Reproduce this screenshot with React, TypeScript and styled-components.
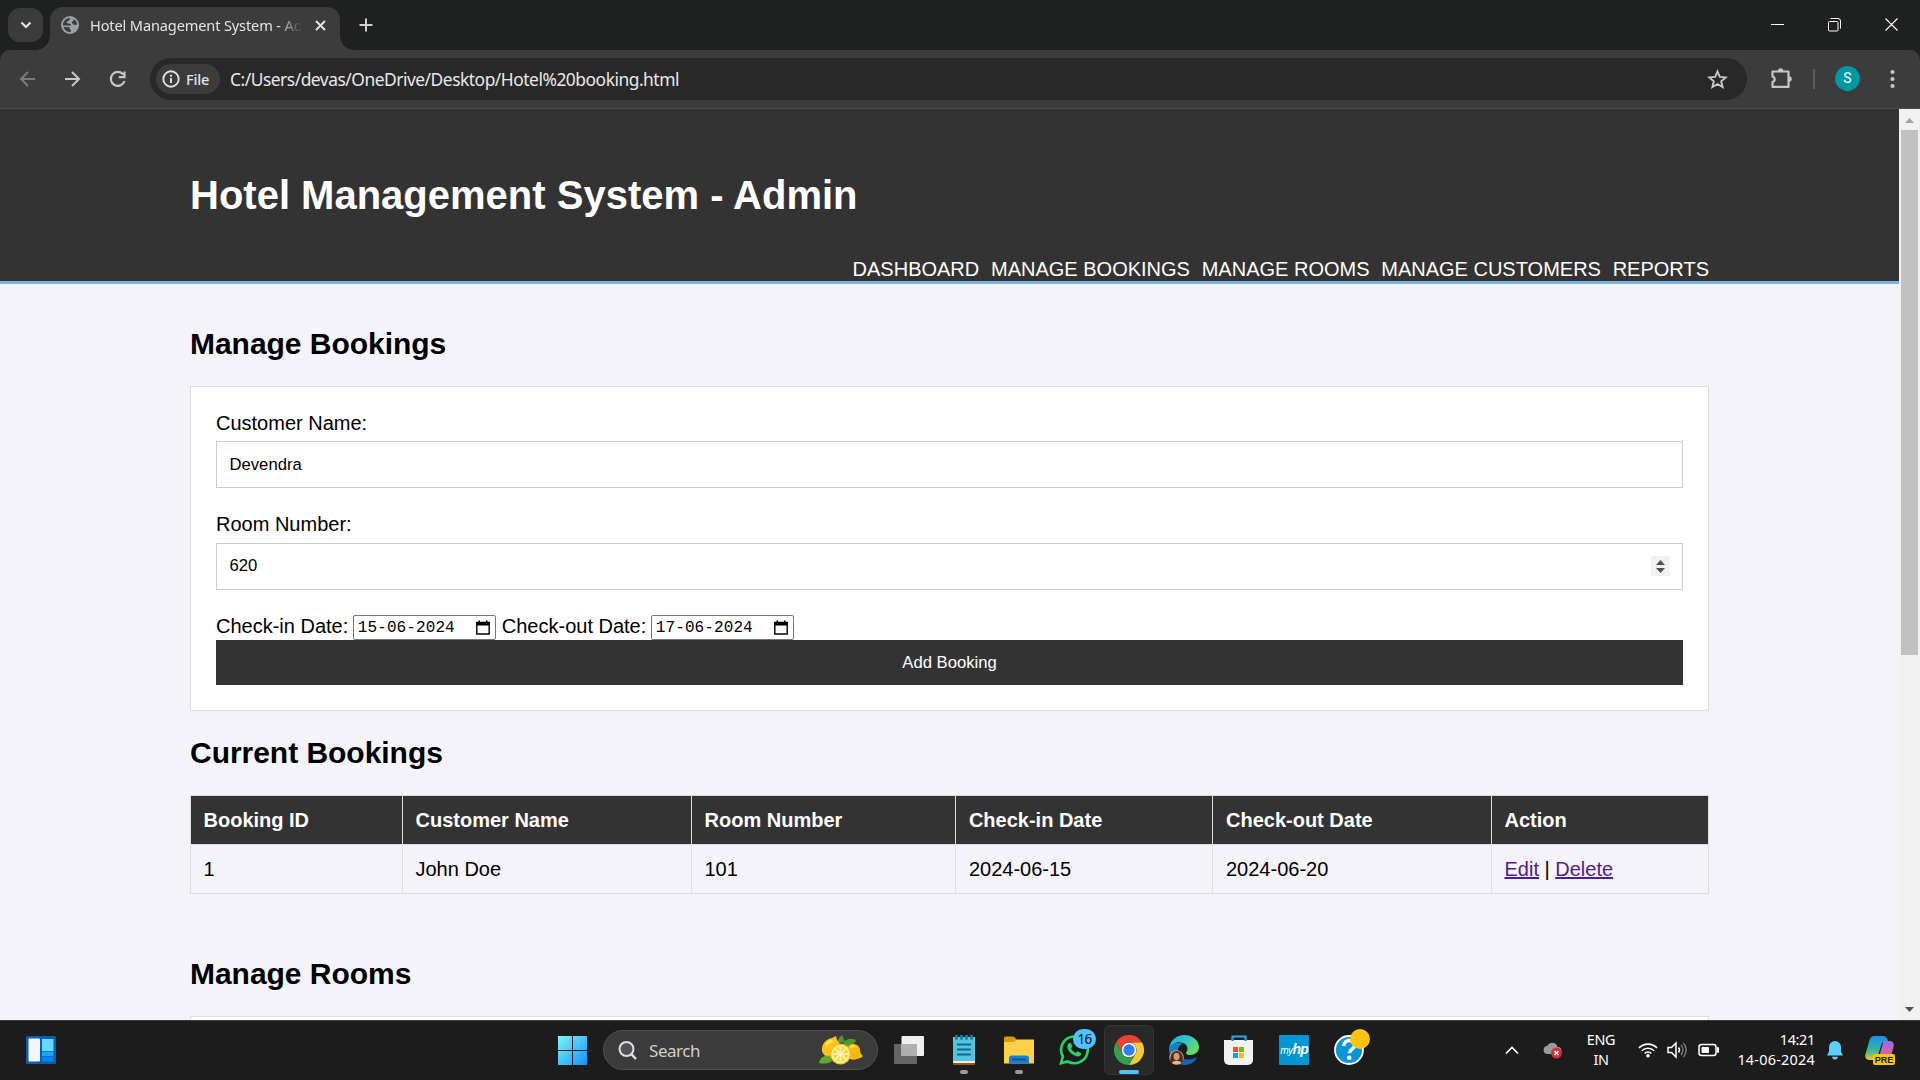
import React from "react";
import styled, { createGlobalStyle } from "styled-components";

const ui = `"Noto Sans", "Open Sans", sans-serif`;
const arial = `"Liberation Sans", Arial, sans-serif`;

const Global = createGlobalStyle`
  *, *::before, *::after { box-sizing: border-box; }
  html, body { margin: 0; padding: 0; background: #1c1c1c; overflow: hidden; }
  svg { display: block; flex: none; }
`;

const Screen = styled.div`
  display: flex;
  flex-direction: column;
  width: 1920px;
  height: 1080px;
  overflow: hidden;
  font-family: ${ui};
`;

/* ---------- browser frame ---------- */
const TabStrip = styled.div`
  display: flex;
  height: 50px;
  background: #1f2120;
  flex: none;
`;
const TabSearch = styled.div`
  width: 35px;
  height: 34px;
  margin: 8px 0 0 8px;
  border-radius: 12px;
  background: #3b3b3b;
  display: flex;
  align-items: center;
  justify-content: center;
`;
const Tab = styled.div`
  position: relative;
  display: flex;
  align-items: center;
  width: 290px;
  height: 43px;
  margin: 7px 0 0 7px;
  padding: 0 14px 7px 11px;
  border-radius: 13px 13px 0 0;
  background: #3c3c3c;
  &::before, &::after {
    content: "";
    position: absolute;
    bottom: 0;
    width: 14px;
    height: 14px;
  }
  &::before { left: -14px; background: radial-gradient(circle at 0 0, transparent 13.5px, #3c3c3c 14px); }
  &::after { right: -14px; background: radial-gradient(circle at 100% 0, transparent 13.5px, #3c3c3c 14px); }
`;
const TabTitle = styled.div`
  flex: 1;
  height: 24px;
  margin: 0 14px 0 11px;
  overflow: hidden;
  white-space: nowrap;
  line-height: 24px;
  font-size: 14.6px;
  letter-spacing: -0.15px;
  color: #e3e3e3;
  -webkit-mask-image: linear-gradient(90deg, #000 188px, transparent 212px);
  mask-image: linear-gradient(90deg, #000 188px, transparent 212px);
`;
const NewTab = styled.div`
  margin: 18px 0 0 18.5px;
`;
const WindowButtons = styled.div`
  display: flex;
  gap: 42px;
  margin: 17px 21px 0 auto;
`;
const ToolbarBack = styled.div`
  flex: none;
  background: #1f2120;
`;
const Toolbar = styled.div`
  display: flex;
  align-items: center;
  height: 59px;
  padding: 0 15px 1px 16px;
  border-bottom: 1px solid #4a4a4a;
  border-radius: 10px 10px 0 0;
  background: #3c3c3c;
`;
const NavButtons = styled.div`
  display: flex;
  gap: 22px;
  width: 134px;
`;
const Omnibox = styled.div`
  display: flex;
  align-items: center;
  width: 1597px;
  height: 42px;
  padding: 0 19px 0 6px;
  border-radius: 21px;
  background: #282828;
`;
const FileChip = styled.div`
  display: flex;
  align-items: center;
  gap: 6px;
  width: 64px;
  height: 30px;
  padding-left: 6px;
  border-radius: 15px;
  background: #3c3c3c;
  color: #e3e3e3;
  font-size: 14.6px;
  font-weight: 500;
  line-height: 20px;
  letter-spacing: -0.2px;
`;
const Url = styled.div`
  flex: 1;
  padding: 1px 0 0 10px;
  color: #e8e8e8;
  font-size: 17.4px;
  line-height: 26px;
  letter-spacing: -0.48px;
`;
const Extensions = styled.div`
  margin-left: 23px;
`;
const Divider = styled.div`
  width: 2px;
  height: 20px;
  margin: 0 20px;
  background: #5c5c5c;
`;
const Avatar = styled.div`
  width: 25px;
  height: 25px;
  margin-right: 30px;
  border-radius: 50%;
  background: #0097a7;
  color: #fff;
  text-align: center;
  font: 14px/25px Roboto, sans-serif;
`;

/* ---------- web page ---------- */
const Viewport = styled.div`
  display: flex;
  height: 911px;
  flex: none;
  overflow: hidden;
`;
const Page = styled.div`
  width: 1899px;
  overflow: hidden;
  background: #f4f3f9;
  color: #000;
  font-family: ${arial};
`;
const Container = styled.div`
  width: 1519px;
  margin: 0 auto;
`;
const Header = styled.header`
  height: 175px;
  padding-top: 62px;
  border-bottom: 3px solid #77b5e9;
  background: #333;
  color: #fff;
`;
const Title = styled.h1`
  margin: 0 0 38px;
  font-size: 40px;
  line-height: 48px;
`;
const Menu = styled.nav`
  display: flex;
  justify-content: flex-end;
  gap: 11.75px;
  font-size: 20px;
  line-height: 24px;
  text-transform: uppercase;
`;
const SectionTitle = styled.h2<{ $top: number }>`
  margin: ${(p) => p.$top}px 0 25px;
  font-size: 30px;
  line-height: 35px;
  letter-spacing: -0.03px;
`;
const Form = styled.div`
  padding: 24px 25px 25px;
  border: 1px solid #ddd;
  background: #fff;
  font-size: 20px;
`;
const Label = styled.label<{ $gap: number }>`
  display: block;
  margin-bottom: ${(p) => p.$gap}px;
  line-height: 24px;
`;
const Field = styled.div<{ $after: number; $lift: number }>`
  display: flex;
  align-items: center;
  justify-content: space-between;
  height: 47px;
  margin-bottom: ${(p) => p.$after}px;
  padding: 0 12px ${(p) => p.$lift}px 12.5px;
  border: 1px solid #ccc;
  background: #fff;
  font-size: 16.667px;
`;
const Spinner = styled.div`
  display: flex;
  width: 19px;
  height: 20px;
  margin-top: 1px;
  background: #f1f1f1;
`;
const DateRow = styled.div`
  display: flex;
  height: 25px;
  line-height: 22px;
`;
const DateBox = styled.div`
  display: flex;
  align-items: center;
  justify-content: space-between;
  width: 143px;
  height: 25px;
  margin: 0 5.5px 0 5px;
  padding: 1px 5px 0 3.5px;
  border: 1px solid #767676;
  border-radius: 2px;
  font: 16px/22px "Liberation Mono", monospace;
  letter-spacing: 0.1px;
`;
const Submit = styled.div`
  height: 45px;
  background: #333;
  color: #fff;
  text-align: center;
  font-size: 16.667px;
  line-height: 45px;
`;
const Row = styled.div<{ $head?: boolean }>`
  display: grid;
  grid-template-columns: 212px 289px 264.4px 257.1px 278.5px 218px;
  height: ${(p) => (p.$head ? 49 : 50)}px;
  border: solid #ddd;
  border-width: ${(p) => (p.$head ? "1px 0 0" : "1px 0")};
  background: ${(p) => (p.$head ? "#333" : "transparent")};
  color: ${(p) => (p.$head ? "#fff" : "#000")};
  font-size: 20px;
  font-weight: ${(p) => (p.$head ? 700 : 400)};
  line-height: 48px;
`;
const Cell = styled.div`
  padding-left: 12.5px;
  border-left: 1px solid #ddd;
  &:last-child { border-right: 1px solid #ddd; }
`;
const Link = styled.a`
  color: #551a8b;
  text-decoration: underline;
`;
const Scrollbar = styled.div`
  display: flex;
  flex-direction: column;
  align-items: center;
  width: 21px;
  background: #f1f1f1;
`;
const Thumb = styled.div`
  width: 17px;
  height: 525px;
  margin-bottom: auto;
  background: #c1c1c1;
`;

/* ---------- taskbar ---------- */
const Taskbar = styled.div`
  display: flex;
  align-items: center;
  height: 60px;
  padding: 0 24px 1px 16px;
  border-top: 1px solid #3a3d3c;
  background: #1c1c1c;
`;
const Apps = styled.div`
  display: flex;
  gap: 5px;
  align-items: center;
  margin-left: 481px;
`;
const TaskButton = styled.div<{ $active?: boolean; $state?: "open" | "focus" }>`
  position: relative;
  display: flex;
  align-items: center;
  justify-content: center;
  width: 50px;
  height: 50px;
  border-radius: 6px;
  border: 1px solid ${(p) => (p.$active ? "#353535" : "transparent")};
  background: ${(p) => (p.$active ? "#292929" : "transparent")};
  &::after {
    content: "";
    position: absolute;
    bottom: 0;
    width: ${(p) => (p.$state === "focus" ? 20 : p.$state ? 8 : 0)}px;
    height: 4px;
    border-radius: 2px;
    background: ${(p) => (p.$state === "focus" ? "#4cc2ff" : "#9a9a9a")};
  }
`;
const SearchBox = styled.div`
  display: flex;
  align-items: center;
  width: 275px;
  height: 40px;
  margin: 0 1px;
  padding: 0 14px;
  border: 1px solid #505050;
  border-radius: 20px;
  background: #3b3b3b;
  color: #cfcfcf;
  font-size: 17px;
`;
const SearchText = styled.div`
  flex: 1;
  padding: 1px 0 0 12px;
  letter-spacing: -0.45px;
`;
const Badge = styled.div`
  position: absolute;
  left: 23px;
  top: 3px;
  width: 23px;
  height: 20px;
  border-radius: 10px;
  background: #4cc2ff;
  color: #111;
  text-align: center;
  font-size: 13.5px;
  line-height: 20px;
  letter-spacing: -0.6px;
`;
const Dot = styled.div`
  position: absolute;
  left: 25px;
  top: 3px;
  width: 20px;
  height: 20px;
  border-radius: 50%;
  background: #ffc20e;
`;
const MyHp = styled.div`
  width: 30px;
  height: 30px;
  border-radius: 1px;
  background: #0096d6;
  color: #fff;
  text-align: center;
  font: italic 10px/29px ${arial};
  letter-spacing: -0.5px;
  b { font-size: 14px; letter-spacing: -1px; }
`;
const Tray = styled.div`
  display: flex;
  align-items: center;
  margin-left: auto;
  color: #fff;
`;
const TrayText = styled.div<{ $w: number; $align: "center" | "right"; $ml: number }>`
  width: ${(p) => p.$w}px;
  margin-left: ${(p) => p.$ml}px;
  text-align: ${(p) => p.$align};
  font-size: 14.4px;
  line-height: 20px;
  letter-spacing: -0.3px;
  white-space: nowrap;
`;
const DateText = styled.div`
  letter-spacing: 0.25px;
`;
const Gap = styled.div<{ $w: number }>`
  width: ${(p) => p.$w}px;
`;

const CalendarIcon = () => (
  <svg width="14" height="16" viewBox="0 0 14 16">
    <path d="M.8 2.500h12.400v11.500H.8z" fill="none" stroke="#000" strokeWidth="1.400" />
    <path d="M.5 2h13v3.400H.5zM2.500.6h1.500v3H2.500zM10 .6h1.500v3H10z" />
  </svg>
);

const Lemons = () => (
  <svg width="44" height="30" viewBox="0 0 44 30">
    <path d="M18 8C20 2 23 0 23 0l3 7zM24 9c3-6 8-6 13-4-2 5-7 7-13 6z" fill="#4f9a2c" />
    <path d="M3 16C2 8 8 4 13 3l4-2 1 4c5 4 4 12 0 15-5 4-13 3-15-4z" fill="#fcc21b" />
    <path d="M28 13c3-6 11-5 13 1 0 4 1 5 3 7-1 2-4 2-6 3-5 2-11-1-11-5z" fill="#f9b90c" />
    <path d="M7 8c2-3 5-4 8-3-2 2-6 4-8 7zM31 11c2-2 6-1 7 2-2-1-5-1-7 1z" fill="#ffe352" />
    <path d="M0 28c1-6 6-8 11-7l2 5c-4 3-8 3-13 2z" fill="#62a92f" />
    <circle cx="21.5" cy="19" r="10.5" fill="#f5bd18" />
    <circle cx="21.5" cy="19" r="9.2" fill="#fff2a6" />
    <circle cx="21.5" cy="19" r="7.8" fill="#ffd83a" />
    <path d="M21.5 11v16M13.5 19h16M16 13.5l11 11M27 13.5l-11 11" stroke="#fff6c4" strokeWidth="1.4" />
  </svg>
);

const ChromeLogo = () => (
  <svg width="30" height="30" viewBox="0 0 48 48">
    <path d="M3.2 12A24 24 0 0 1 44.8 12H24A12 12 0 0 0 13.6 30z" fill="#ea4335" />
    <path d="M44.8 12A24 24 0 0 1 24 48l10.4-18A12 12 0 0 0 24 12z" fill="#fcc934" />
    <path d="M3.2 12A24 24 0 0 0 24 48l10.4-18A12 12 0 0 1 13.6 30z" fill="#34a04c" />
    <circle cx="24" cy="24" r="11.7" fill="#fff" />
    <circle cx="24" cy="24" r="9.1" fill="#2f7df0" />
  </svg>
);

const EdgeLogo = () => (
  <svg width="30" height="30" viewBox="0 0 30 30">
    <defs>
      <linearGradient id="edgeTop" x1="0" y1="0" x2="1" y2=".5">
        <stop offset="0" stopColor="#2aa7e8" /><stop offset=".55" stopColor="#2fc3c9" /><stop offset="1" stopColor="#62e05b" />
      </linearGradient>
      <linearGradient id="edgeLow" x1="0" y1="0" x2="1" y2="1">
        <stop offset="0" stopColor="#1a8fd8" /><stop offset="1" stopColor="#0b4a94" />
      </linearGradient>
    </defs>
    <path d="M0 14C1 5 8 0 15 0c9 0 15 6 15 12 0 5-4 8-9 8-4 0-5-2-3-4 1-2 1-6-4-8C9 6 3 8 0 14z" fill="url(#edgeTop)" />
    <path d="M0 14c2-5 9-8 14-5-4 1-6 5-5 9 1 6 7 9 12 8 4 0 6-2 7-3-3 5-8 7-13 7C6 30 0 23 0 14z" fill="url(#edgeLow)" />
    <path d="M9 17c1 7 10 10 19 5-3 6-8 8-13 8-3 0-6-5-6-13z" fill="#1565b5" />
    <circle cx="7.5" cy="22.5" r="7.2" fill="#c9b59a" />
    <path d="M1.500 27c-1-6 1.500-11 6-11s7.500 4 6 11c-1 2-3 2.500-6 2.500s-5-.5-6-2.500z" fill="#4a2c1d" />
    <ellipse cx="7.500" cy="21.500" rx="3" ry="3.800" fill="#d39a73" />
    <path d="M3 28c1-3 8-3 9.500 0-3 2-7 2-9.500 0z" fill="#e8b78a" />
  </svg>
);

const columns = ["Booking ID", "Customer Name", "Room Number", "Check-in Date", "Check-out Date", "Action"];
const booking = ["1", "John Doe", "101", "2024-06-15", "2024-06-20"];
const menu = ["Dashboard", "Manage Bookings", "Manage Rooms", "Manage Customers", "Reports"];

export default function App() {
  return (
    <Screen>
      <Global />
      <TabStrip>
        <TabSearch>
          <svg width="12" height="8" viewBox="0 0 12 8"><path d="M1.500 1.500 6 6l4.500-4.500" fill="none" stroke="#e3e3e3" strokeWidth="2.1" /></svg>
        </TabSearch>
        <Tab>
          <svg width="18" height="18" viewBox="0 0 18 18">
            <circle cx="9" cy="9" r="9" fill="#9aa0a6" />
            <path d="M9.500 2C8 3 9 4.200 7.500 4.800S5 6 6 7s3.500 0 3.800 1.500-1.300 1.200-2.800 1H2.100C1.500 5.500 5 1.800 9.500 2z" fill="#3c3c3c" />
            <path d="M12.500 3c2 1 3.600 3.300 3.600 5.500-1.500.8-3 .5-4-.3s-1.600-1.700-.6-2.700 1.400-1 1-2.500zM2.500 11h4.200c1.600 0 2.300.8 2.300 2s1 .5 1 1.800-.7 1.200-1 1.300C6 16 3.300 14 2.500 11z" fill="#3c3c3c" />
          </svg>
          <TabTitle>Hotel Management System - Admin</TabTitle>
          <svg width="11" height="11" viewBox="0 0 11 11"><path d="M1 1l9 9M10 1l-9 9" stroke="#e3e3e3" strokeWidth="1.900" /></svg>
        </Tab>
        <NewTab>
          <svg width="14" height="14" viewBox="0 0 14 14"><path d="M7 0.500v13M.5 7h13" stroke="#d0d0d0" strokeWidth="2" /></svg>
        </NewTab>
        <WindowButtons>
          <svg width="15" height="15" viewBox="0 0 15 15"><path d="M1 7.500h13" stroke="#fff" /></svg>
          <svg width="15" height="15" viewBox="0 0 15 15" fill="none" stroke="#fff">
            <rect x="1.500" y="4.500" width="9.500" height="9.500" rx="1" />
            <path d="M3.500 1.500H11a2.500 2.500 0 0 1 2.500 2.500v7.500" />
          </svg>
          <svg width="15" height="15" viewBox="0 0 15 15"><path d="M1.500 1.500l12 12M13.500 1.500l-12 12" stroke="#fff" strokeWidth="1.100" /></svg>
        </WindowButtons>
      </TabStrip>

      <ToolbarBack>
        <Toolbar>
          <NavButtons>
            <svg width="23" height="20" viewBox="0 0 23 20"><path d="M19 10H5.500M12 3l-7 7 7 7" fill="none" stroke="#7b7b7b" strokeWidth="2" /></svg>
            <svg width="23" height="20" viewBox="0 0 23 20"><path d="M4 10h13.500M11 3l7 7-7 7" fill="none" stroke="#c7c7c7" strokeWidth="2" /></svg>
            <svg width="23" height="20" viewBox="0 0 23 20"><path d="M17.300 5.500A7 7 0 1 0 18.500 12M18.500 2.500v5.700h-5.700" fill="none" stroke="#c7c7c7" strokeWidth="2.200" /></svg>
          </NavButtons>
          <Omnibox>
            <FileChip>
              <svg width="18" height="18" viewBox="0 0 18 18"><circle cx="9" cy="9" r="7.700" fill="none" stroke="#e3e3e3" strokeWidth="1.900" /><path d="M9 8v5M9 4.800v1.900" stroke="#e3e3e3" strokeWidth="1.900" /></svg>
              File
            </FileChip>
            <Url>C:/Users/devas/OneDrive/Desktop/Hotel%20booking.html</Url>
            <svg width="21" height="20" viewBox="0 0 21 20"><path d="M10.500 2.500l2.300 5.400 5.900.5-4.500 3.900 1.400 5.700-5.100-3-5.100 3 1.400-5.700L2.300 8.400l5.900-.5z" fill="none" stroke="#c7c7c7" strokeWidth="1.900" /></svg>
          </Omnibox>
          <Extensions>
            <svg width="23" height="23" viewBox="0 0 23 23">
              <path d="M2.500 4.500h16v15.400h-16v-4.800a2.900 2.900 0 0 0 0-5.600z" fill="none" stroke="#c7c7c7" strokeWidth="2.200" strokeLinejoin="round" />
              <path d="M7.900 4a2.700 2.700 0 0 1 5.400 0zM19 9.200a2.800 2.800 0 0 1 0 5.600z" fill="#c7c7c7" />
            </svg>
          </Extensions>
          <Divider />
          <Avatar>S</Avatar>
          <svg width="5" height="20" viewBox="0 0 5 20" fill="#c7c7c7"><circle cx="2.500" cy="3" r="2.100" /><circle cx="2.500" cy="10" r="2.100" /><circle cx="2.500" cy="17" r="2.100" /></svg>
        </Toolbar>
      </ToolbarBack>

      <Viewport>
        <Page>
          <Header>
            <Container>
              <Title>Hotel Management System - Admin</Title>
              <Menu>{menu.map((m) => <span key={m}>{m}</span>)}</Menu>
            </Container>
          </Header>
          <Container>
            <SectionTitle $top={42}>Manage Bookings</SectionTitle>
            <Form>
              <Label $gap={6}>Customer Name:</Label>
              <Field $after={24} $lift={0}>Devendra</Field>
              <Label $gap={7}>Room Number:</Label>
              <Field $after={25} $lift={2}>
                620
                <Spinner>
                  <svg width="19" height="20" viewBox="0 0 19 20"><path d="M5 9l4.500-5L14 9zM5 12h9l-4.500 5z" fill="#505050" /></svg>
                </Spinner>
              </Field>
              <DateRow>
                Check-in Date:
                <DateBox>15-06-2024<CalendarIcon /></DateBox>
                Check-out Date:
                <DateBox>17-06-2024<CalendarIcon /></DateBox>
              </DateRow>
              <Submit>Add Booking</Submit>
            </Form>
            <SectionTitle $top={24}>Current Bookings</SectionTitle>
            <Row $head>{columns.map((c) => <Cell key={c}>{c}</Cell>)}</Row>
            <Row>
              {booking.map((c) => <Cell key={c}>{c}</Cell>)}
              <Cell><Link>Edit</Link> | <Link>Delete</Link></Cell>
            </Row>
            <SectionTitle $top={62}>Manage Rooms</SectionTitle>
            <Form />
          </Container>
        </Page>
        <Scrollbar>
          <svg width="21" height="21" viewBox="0 0 21 21"><path d="M6 14l4.500-5L15 14z" fill="#a3a3a3" /></svg>
          <Thumb />
          <svg width="21" height="21" viewBox="0 0 21 21"><path d="M6 8h9l-4.500 5z" fill="#505050" /></svg>
        </Scrollbar>
      </Viewport>

      <Taskbar>
        <TaskButton>
          <svg width="30" height="28" viewBox="0 0 30 28">
            <rect width="30" height="28" rx="1.500" fill="#0a5fb4" />
            <rect x="2.500" y="2.500" width="11.500" height="23" rx="1" fill="#f5f5f5" />
            <path d="M16 3h11.500v12H16z" fill="#69d8ff" /><path d="M16 15.500h11.500V20H16z" fill="#1fa3fa" /><path d="M16 20.500h11.500v5H16z" fill="#0a84ea" />
          </svg>
        </TaskButton>
        <Apps>
          <TaskButton>
            <svg width="29" height="29" viewBox="0 0 29 29">
              <defs><linearGradient id="win" x1="0" y1="0" x2="1" y2="1" gradientUnits="objectBoundingBox"><stop offset="0" stopColor="#7ff4ff" /><stop offset="1" stopColor="#0d93fb" /></linearGradient></defs>
              <path d="M0 0h14v14H0zM15 0h14v14H15zM0 15h14v14H0zM15 15h14v14H15z" fill="url(#win)" />
            </svg>
          </TaskButton>
          <SearchBox>
            <svg width="19" height="19" viewBox="0 0 19 19" fill="none" stroke="#dcdfe3" strokeWidth="2"><circle cx="8.500" cy="8" r="7" fill="#505254" /><path d="M13.300 13.200l4.700 4.800" strokeWidth="2.400" /></svg>
            <SearchText>Search</SearchText>
            <Lemons />
          </SearchBox>
          <TaskButton>
            <svg width="30" height="28" viewBox="0 0 30 28"><rect y="8" width="23" height="20" rx="1" fill="#656565" /><rect x="7.500" width="22.500" height="20" rx="1" fill="#f0f0f0" /><path d="M7.500 8H23v12H7.500z" fill="#b0b0b0" /></svg>
          </TaskButton>
          <TaskButton $state="open">
            <svg width="22" height="30" viewBox="0 0 22 30">
              <rect y="24" width="22" height="6" rx="1" fill="#a9500f" /><rect y="2" width="22" height="26" rx="1" fill="#e9eef0" /><rect y="2" width="22" height="24" rx="1" fill="#55c2de" />
              <path d="M4 9.500h14M4 14.500h14M4 19.500h14" stroke="#0d6a8f" strokeWidth="2" />
              <path d="M3.500.5v3M8.500.5v3M13.500.5v3M18.500.5v3" stroke="#0d7fa8" strokeWidth="2.800" strokeLinecap="round" />
            </svg>
          </TaskButton>
          <TaskButton $state="open">
            <svg width="30" height="28" viewBox="0 0 30 28">
              <path d="M0 2a1.500 1.500 0 0 1 1.500-1.500H9c2 0 3 3.500 5 3.500v8H0z" fill="#dc9b06" />
              <path d="M0 6h9c2 0 3-2.500 5-2.500h16V27.500H0z" fill="#ffd149" />
              <path d="M5 27.500V22a2.500 2.500 0 0 1 2.500-2.500h15A2.500 2.500 0 0 1 25 22v5.500z" fill="#1680d3" /><path d="M9 23.500h12" stroke="#08549b" strokeWidth="1.800" strokeLinecap="round" />
            </svg>
          </TaskButton>
          <TaskButton>
            <svg width="30" height="30" viewBox="0 0 30 30">
              <path d="M2 28.200 3.900 21.500A13.300 13.300 0 1 1 9 26.500z" fill="none" stroke="#25d366" strokeWidth="2.600" />
              <path d="M9.500 8.500c1-1 2.200-1 2.700.2l1 2.400c.3.900-.9 1.800-1.200 2.400.9 2 2.700 3.500 4.800 4.400.7-.4 1.400-1.800 2.200-1.500l2.600 1.300c.9.500.5 2.300-.6 3.100-1.500 1-3.600.8-6.500-.7-3.400-1.900-5.500-5-6-7.200-.3-1.800.2-3.500 1-4.400z" fill="#25d366" />
            </svg>
            <Badge>16</Badge>
          </TaskButton>
          <TaskButton $active $state="focus"><ChromeLogo /></TaskButton>
          <TaskButton><EdgeLogo /></TaskButton>
          <TaskButton>
            <svg width="30" height="30" viewBox="0 0 30 30">
              <path d="M8.500 7V1.500h13V7" fill="none" stroke="#27a7ee" strokeWidth="2.200" />
              <path d="M0 5h29v20a5 5 0 0 1-5 5H5a5 5 0 0 1-5-5z" fill="#f1f1f1" />
              <path d="M8.500 6V3M21.500 6V3" stroke="#1689cf" strokeWidth="2.200" />
              <path d="M9 12h5v5H9z" fill="#f25022" /><path d="M15 12h5v5h-5z" fill="#7fba00" /><path d="M9 18h5v5H9z" fill="#00a4ef" /><path d="M15 18h5v5h-5z" fill="#ffb900" />
            </svg>
          </TaskButton>
          <TaskButton><MyHp>my<b>hp</b></MyHp></TaskButton>
          <TaskButton>
            <svg width="30" height="30" viewBox="0 0 30 30">
              <circle cx="15" cy="15" r="14" fill="#0a96d8" stroke="#fff" strokeWidth="1.800" />
              <path d="M9.800 11c0-3.500 2.500-5.500 5.400-5.500 3.200 0 5.400 2 5.400 4.700 0 3.800-5.200 4-5.200 8" fill="none" stroke="#fff" strokeWidth="3.400" /><circle cx="15.300" cy="22.800" r="2.200" fill="#fff" />
            </svg>
            <Dot />
          </TaskButton>
        </Apps>
        <Tray>
          <svg width="14" height="9" viewBox="0 0 14 9"><path d="M1 7.500l6-6 6 6" fill="none" stroke="#fff" strokeWidth="1.600" /></svg>
          <Gap $w={23} />
          <svg width="22" height="18" viewBox="0 0 22 18">
            <path d="M5 13a4.200 4.200 0 0 1 .3-8.300A5.500 5.500 0 0 1 15.500 6 3.600 3.600 0 0 1 17 13z" fill="#9a9a9a" />
            <circle cx="14.500" cy="12" r="5.500" fill="#d42f35" /><path d="M12.500 10l4 4M16.500 10l-4 4" stroke="#fff" strokeWidth="1.400" />
          </svg>
          <TrayText $w={40} $align="center" $ml={17}>ENG<br />IN</TrayText>
          <Gap $w={17} />
          <svg width="20" height="16" viewBox="0 0 20 16" fill="none" stroke="#fff" strokeWidth="1.600">
            <path d="M1 6a12.500 12.500 0 0 1 18 0M3.800 8.800a8.700 8.700 0 0 1 12.400 0M6.600 11.500a4.900 4.900 0 0 1 6.800 0" /><circle cx="10" cy="13.700" r="1" fill="#fff" />
          </svg>
          <Gap $w={9} />
          <svg width="20" height="18" viewBox="0 0 20 18" fill="none" stroke="#fff" strokeWidth="1.500">
            <path d="M1 6.500h3.500L9 2v14l-4.500-4.500H1z" /><path d="M11.500 6.500a4 4 0 0 1 0 5" /><path d="M14 4a7.500 7.500 0 0 1 0 10M16.300 2a10 10 0 0 1 0 14" stroke="#777" />
          </svg>
          <Gap $w={11} />
          <svg width="22" height="14" viewBox="0 0 22 14"><rect x="1" y="1.500" width="17" height="11" rx="2.500" fill="none" stroke="#fff" strokeWidth="1.500" /><rect x="3.500" y="4" width="7.500" height="6" rx="1" fill="#fff" /><path d="M20 5v4" stroke="#fff" strokeWidth="2" strokeLinecap="round" /></svg>
          <TrayText $w={90} $align="right" $ml={5}>14:21<DateText>14-06-2024</DateText></TrayText>
          <Gap $w={11} />
          <svg width="18" height="20" viewBox="0 0 18 20" fill="#60cdff"><path d="M9 1a6 6 0 0 0-6 6v4.500L1 15.500h16l-2-4V7a6 6 0 0 0-6-6zM6.200 16.800h5.600a2.800 2.800 0 0 1-5.600 0z" /></svg>
          <Gap $w={21} />
          <svg width="31" height="30" viewBox="0 0 31 30">
            <defs>
              <linearGradient id="copA" x1="0" y1="0" x2="0" y2="1"><stop offset="0" stopColor="#1b8de8" /><stop offset=".6" stopColor="#35b8a0" /><stop offset="1" stopColor="#f2c22e" /></linearGradient>
              <linearGradient id="copB" x1="0" y1="0" x2="0" y2="1"><stop offset="0" stopColor="#9b6cf0" /><stop offset="1" stopColor="#ee5b84" /></linearGradient>
            </defs>
            <path d="M9 1h9c3 0 4 2 5 5l-6 2-4 12c-1 4-3 5-6 5H4c-3 0-4.500-3-3.500-6l4-14C5.500 2 7 1 9 1z" fill="url(#copA)" />
            <path d="M20 6h5c3 0 4.500 3 3.500 6l-3 11H12c2 0 2-2 3-5l3-10c.4-1.200 1-2 2-2z" fill="url(#copB)" />
            <rect x="8" y="19" width="22" height="11" rx="2" fill="#f7c600" />
            <text x="19" y="28" textAnchor="middle" fontFamily="Liberation Sans, sans-serif" fontSize="9" fontWeight="700" fill="#222">PRE</text>
          </svg>
        </Tray>
      </Taskbar>
    </Screen>
  );
}
